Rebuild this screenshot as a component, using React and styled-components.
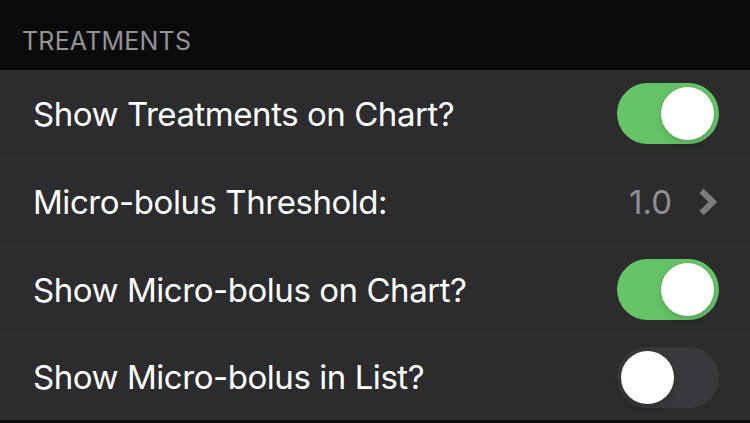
import React from "react";
import styled, { createGlobalStyle } from "styled-components";

const Global = createGlobalStyle`
  html, body { margin: 0; padding: 0; background: #0b0b0b; }
  body { font-family: Inter, "Noto Sans", sans-serif; -webkit-font-smoothing: antialiased; }
`;

const Page = styled.div`
  width: 750px;
  height: 423px;
  background: #0b0b0b;
  overflow: hidden;
  display: flex;
  flex-direction: column;
`;

const SectionHeader = styled.div`
  height: 70px;
  box-sizing: border-box;
  padding: 26px 0 0 22px;
  color: #939397;
  font-size: 25px;
  letter-spacing: 0.2px;
  line-height: 30px;
`;

const Group = styled.div`
  background: #2c2c2e;
  display: flex;
  flex-direction: column;
`;

const Row = styled.div`
  height: ${(p) => (p.$last ? "86px" : "88px")};
  display: flex;
  align-items: center;
  padding: 0 32px 0 33px;
  box-sizing: border-box;
  border-bottom: ${(p) => (p.$last ? "none" : "1px solid #333335")};
`;

const Label = styled.div`
  flex: 1;
  color: #ffffff;
  font-size: 33px;
  letter-spacing: -0.45px;
`;

const Value = styled.div`
  color: #8e8e93;
  font-size: 33px;
  margin-right: 26px;
`;

const Track = styled.div`
  width: 102px;
  height: 61px;
  border-radius: 31px;
  background: ${(p) => (p.$on ? "#65c466" : "#39393d")};
  position: relative;
  flex-shrink: 0;
  margin-right: -1px;
`;

const Knob = styled.div`
  position: absolute;
  top: 4px;
  left: ${(p) => (p.$on ? "44px" : "4px")};
  width: 53px;
  height: 53px;
  border-radius: 50%;
  background: #ffffff;
  box-shadow: 0 3px 8px rgba(0, 0, 0, 0.15), 0 0 1px rgba(0, 0, 0, 0.2);
`;

const Toggle = ({ on }) => (
  <Track $on={on}>
    <Knob $on={on} />
  </Track>
);

const Chevron = () => (
  <svg width="20" height="28" viewBox="0 0 20 28">
    <polyline
      points="3.5,3 15,14 3.5,25"
      fill="none"
      stroke="#7c7c80"
      strokeWidth="6"
      strokeLinecap="butt"
      strokeLinejoin="miter"
    />
  </svg>
);

export default function App() {
  return (
    <Page>
      <Global />
      <SectionHeader>TREATMENTS</SectionHeader>
      <Group>
        <Row>
          <Label>Show Treatments on Chart?</Label>
          <Toggle on />
        </Row>
        <Row>
          <Label>Micro-bolus Threshold:</Label>
          <Value>1.0</Value>
          <Chevron />
        </Row>
        <Row>
          <Label>Show Micro-bolus on Chart?</Label>
          <Toggle on />
        </Row>
        <Row $last>
          <Label>Show Micro-bolus in List?</Label>
          <Toggle on={false} />
        </Row>
      </Group>
    </Page>
  );
}
